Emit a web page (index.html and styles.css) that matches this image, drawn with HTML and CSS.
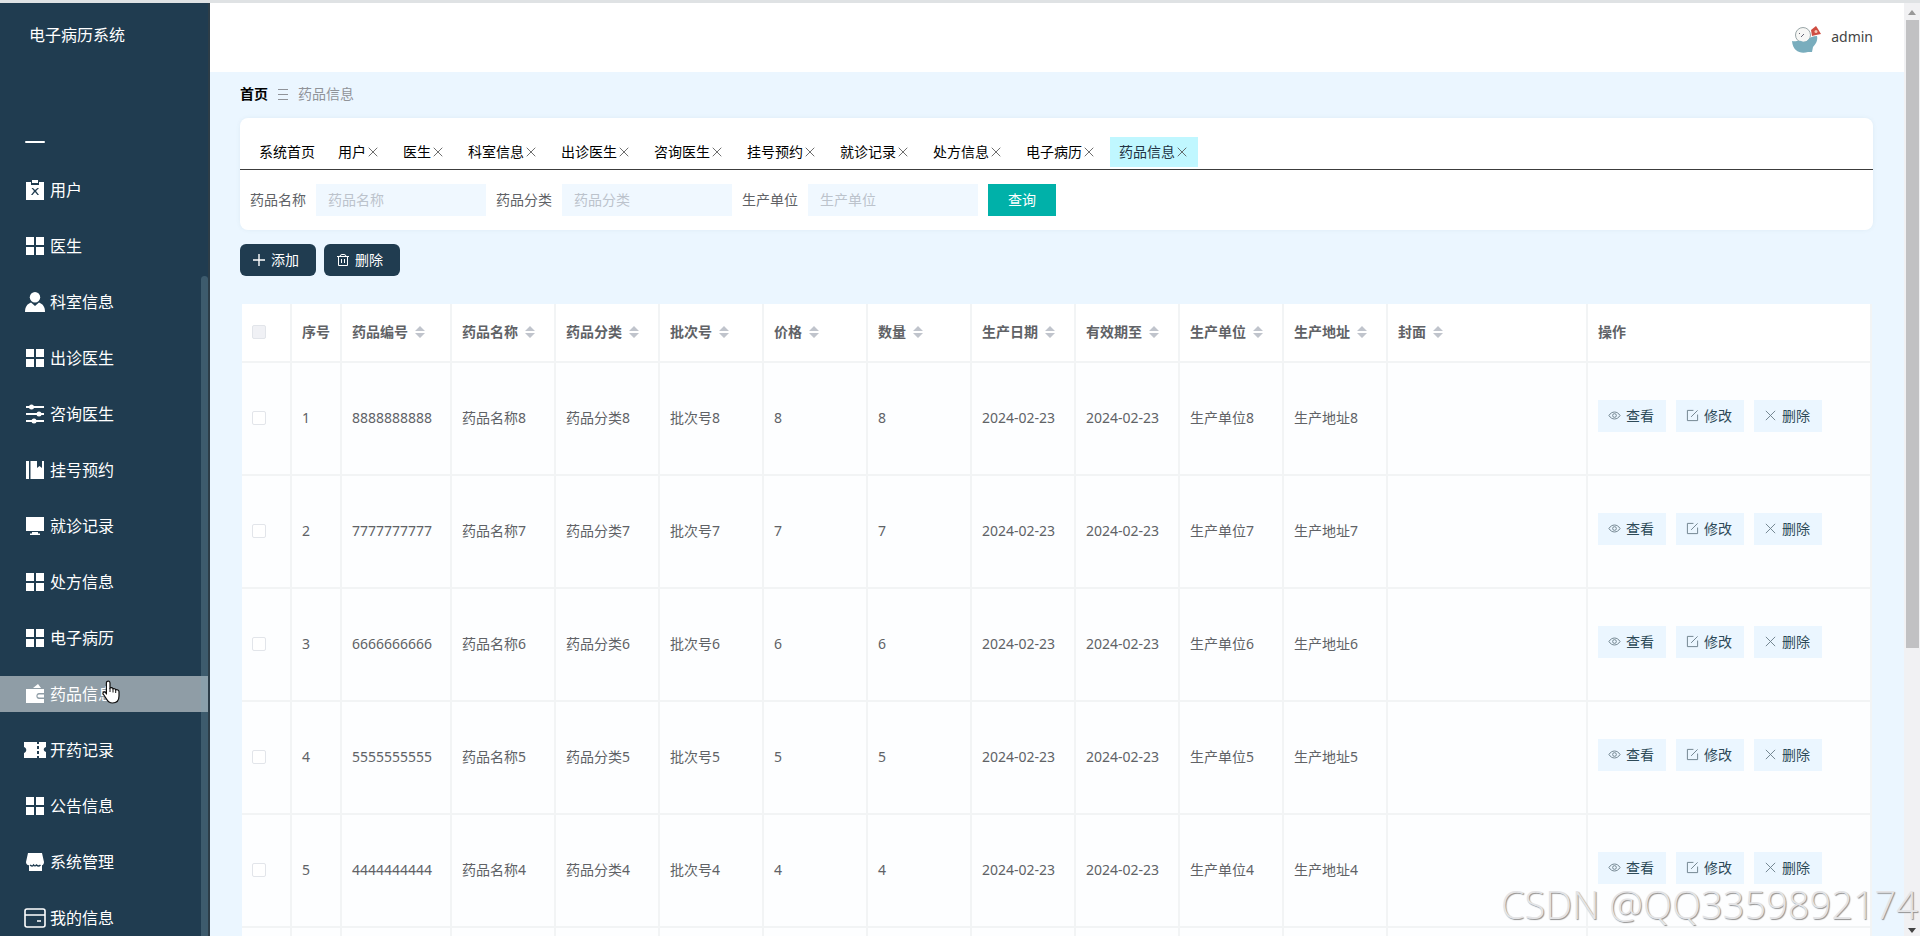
FILE: index.html
```html
<!DOCTYPE html>
<html lang="zh-CN">
<head>
<meta charset="utf-8">
<title>电子病历系统</title>
<link rel="stylesheet" href="styles.css">
</head>
<body>
<svg class="sprite" aria-hidden="true">
  <symbol id="grid" viewBox="0 0 20 20"><path d="M1 1h8v8H1zM11 1h8v8h-8zM1 11h8v8H1zM11 11h8v8h-8z"/></symbol>
  <symbol id="clip" viewBox="0 0 20 20"><path fill-rule="evenodd" d="M1 2h5v3h8V2h5v18H1zM7 0h6v3H7zM6.500 8 9 11l-3 4h1.500L10 12l2.500 3H14l-3-4 3-3h-1.500L10 10 8 8z"/></symbol>
  <symbol id="person" viewBox="0 0 20 20"><circle cx="10" cy="5.200" r="5.200"/><path d="M0 20c0-5 2-8 6-9.500l4 3.500 4-3.500c4 1.500 6 4.500 6 9.500z"/></symbol>
  <symbol id="sliders" viewBox="0 0 20 20"><path d="M1 2h18v2H1zM1 9h18v2H1zM1 16h18v2H1z"/><circle cx="6.500" cy="3" r="2.500"/><circle cx="14" cy="10" r="2.500"/><circle cx="9" cy="17" r="2.500"/></symbol>
  <symbol id="book" viewBox="0 0 20 20"><path d="M1 1h3v18H1zM5.500 1H12v7l2.500-2L17 8V1h2v18H5.500z"/></symbol>
  <symbol id="monitor" viewBox="0 0 20 20"><path d="M1 1h18v14H1zM7 16h6v1.500h2V19H5v-1.500h2z"/></symbol>
  <symbol id="wallet" viewBox="0 0 20 20"><path fill-rule="evenodd" d="M8 4 13 0l3 4zM1 5h18v4h-5c-3.500 0-3.500 6 0 6h5v4H1zM14 10.500h5v3h-5c-2 0-2-3 0-3z"/></symbol>
  <symbol id="ticket" viewBox="0 0 22 20"><path fill-rule="evenodd" d="M0 2h13v2h2V2h7v5c-3 1-3 4 0 5v6h-7v-2h-2v2H0v-5c3-1 3-5 0-6zM13 6v3h2V6zM13 11v3h2v-3z"/></symbol>
  <symbol id="shop" viewBox="0 0 20 20"><path d="M3 1h14l2 9c0 2-1 3-2 3.200V19H4v-5.800C2 13 1 12 1 10z"/><path d="M5 13c1.500 1.500 3 1 3.500 0 1 1.200 2 1.200 3 0 1 1 2.500 1.500 4 0" fill="none" stroke="#203c50" stroke-width="1.400"/></symbol>
  <symbol id="card" viewBox="0 0 22 20"><path fill="none" stroke="currentColor" stroke-width="1.600" d="M3 1h16q2 0 2 2v14q0 2-2 2H3q-2 0-2-2V3q0-2 2-2zM1 7h20M13 13h4"/></symbol>
  <symbol id="eye" viewBox="0 0 14 14"><path class="ln" d="M1 7c3-5 9-5 12 0-3 5-9 5-12 0z"/><circle class="ln" cx="7" cy="7" r="2"/></symbol>
  <symbol id="edit" viewBox="0 0 14 14"><path class="ln" d="M8 1.500H1.500v11h11V6M5.500 8.500l7-7"/></symbol>
  <symbol id="cross" viewBox="0 0 14 14"><path class="ln" d="m2 2 10 10M12 2 2 12"/></symbol>
  <symbol id="plus" viewBox="0 0 14 14"><path fill="none" stroke="currentColor" stroke-width="1.400" d="M7 1v12M1 7h12"/></symbol>
  <symbol id="trash" viewBox="0 0 14 14"><path class="ln" d="M1 3.500h12M4 3.500q0-2 2-2h2q2 0 2 2M2.500 3.500v9h9v-9M5.500 6v4M8.500 6v4"/></symbol>
  <symbol id="sort" viewBox="0 0 10 12"><path d="M5 0l5 5H0zM0 7h10l-5 5z"/></symbol>
  <symbol id="lines" viewBox="0 0 12 12"><path class="ln" d="M1 1.500h10M1 6.500h10M1 11.500h10"/></symbol>
</svg>
<div class="app">
  <aside class="side">
    <h1 class="brand">电子病历系统</h1>
    <nav class="menu">
      <a href="#" class="item cut" aria-label="首页"><span class="roof"></span></a>
      <a href="#" class="item"><svg class="mi"><use href="#clip"/></svg>用户</a>
      <a href="#" class="item"><svg class="mi"><use href="#grid"/></svg>医生</a>
      <a href="#" class="item"><svg class="mi"><use href="#person"/></svg>科室信息</a>
      <a href="#" class="item"><svg class="mi"><use href="#grid"/></svg>出诊医生</a>
      <a href="#" class="item"><svg class="mi"><use href="#sliders"/></svg>咨询医生</a>
      <a href="#" class="item"><svg class="mi"><use href="#book"/></svg>挂号预约</a>
      <a href="#" class="item"><svg class="mi"><use href="#monitor"/></svg>就诊记录</a>
      <a href="#" class="item"><svg class="mi"><use href="#grid"/></svg>处方信息</a>
      <a href="#" class="item"><svg class="mi"><use href="#grid"/></svg>电子病历</a>
      <a href="#" class="item on"><svg class="mi"><use href="#wallet"/></svg>药品信息
        <svg class="hand" viewBox="0 0 18 24"><path d="M5 1.500c1.500-1 3 0 3 1.500v5c1-.8 2.500-.3 3 .8 1-.5 2.400 0 2.700 1 1.500-.4 3.300.2 3.300 2V16c0 4-2 7-6.500 7-4 0-5-2-6-4L1.200 14c-.8-1.700 1-2.800 2.200-1.500l1 1V3q0-1 .6-1.500z" fill="#fff" stroke="#111" stroke-width="1.200"/><path d="M8 8v4M11 9v3.500M13.700 10v3" stroke="#111" fill="none"/></svg></a>
      <a href="#" class="item"><svg class="mi"><use href="#ticket"/></svg>开药记录</a>
      <a href="#" class="item"><svg class="mi"><use href="#grid"/></svg>公告信息</a>
      <a href="#" class="item"><svg class="mi"><use href="#shop"/></svg>系统管理</a>
      <a href="#" class="item"><svg class="mi"><use href="#card"/></svg>我的信息</a>
    </nav>
    <span class="sidebar-thumb"></span>
  </aside>
  <div class="page">
    <header class="top">
      <svg class="avatar" viewBox="0 0 30 28"><circle cx="12" cy="9" r="7.500" fill="#f7f7f5" stroke="#9aa6a8"/><path d="M1 15c4 1 6-1 9 0 2 1 5 1 7-1 2-3 5-4 9-4 1 4-1 8-4 11l-1 5h-4c-7 2-15 0-16-11z" fill="#79adbd"/><path d="m10 11 3-3m-5-1 1 1" stroke="#667"/><path d="m20 4 5-4 2 3 3 5-5 1-4 1z" fill="#cf4d42"/><circle cx="25" cy="5.500" r="1.500" fill="#f4c9b8"/></svg>
      <span>admin</span>
    </header>
    <main class="main">
      <nav class="crumb"><a href="#">首页</a><svg><use href="#lines"/></svg><span>药品信息</span></nav>
      <section class="panel">
        <div class="tabs">
          <a href="#" class="tab">系统首页</a>
          <a href="#" class="tab">用户<svg><use href="#cross"/></svg></a>
          <a href="#" class="tab">医生<svg><use href="#cross"/></svg></a>
          <a href="#" class="tab">科室信息<svg><use href="#cross"/></svg></a>
          <a href="#" class="tab">出诊医生<svg><use href="#cross"/></svg></a>
          <a href="#" class="tab">咨询医生<svg><use href="#cross"/></svg></a>
          <a href="#" class="tab">挂号预约<svg><use href="#cross"/></svg></a>
          <a href="#" class="tab">就诊记录<svg><use href="#cross"/></svg></a>
          <a href="#" class="tab">处方信息<svg><use href="#cross"/></svg></a>
          <a href="#" class="tab">电子病历<svg><use href="#cross"/></svg></a>
          <a href="#" class="tab active">药品信息<svg><use href="#cross"/></svg></a>
        </div>
        <form class="search">
          <label for="q1">药品名称</label><input id="q1" type="text" placeholder="药品名称">
          <label for="q2">药品分类</label><input id="q2" type="text" placeholder="药品分类">
          <label for="q3">生产单位</label><input id="q3" type="text" placeholder="生产单位">
          <button type="button">查询</button>
        </form>
      </section>
      <div class="tools">
        <button type="button"><svg><use href="#plus"/></svg>添加</button>
        <button type="button"><svg><use href="#trash"/></svg>删除</button>
      </div>
      <table class="grid">
        <colgroup><col class="c-s"><col class="c-s"><col class="c-id"><col span="9" class="c-m"><col class="c-pic"><col></colgroup>
        <thead><tr>
          <th><input type="checkbox" disabled aria-label="全选"></th><th>序号</th>
          <th>药品编号<svg><use href="#sort"/></svg></th><th>药品名称<svg><use href="#sort"/></svg></th><th>药品分类<svg><use href="#sort"/></svg></th><th>批次号<svg><use href="#sort"/></svg></th><th>价格<svg><use href="#sort"/></svg></th><th>数量<svg><use href="#sort"/></svg></th><th>生产日期<svg><use href="#sort"/></svg></th><th>有效期至<svg><use href="#sort"/></svg></th><th>生产单位<svg><use href="#sort"/></svg></th><th>生产地址<svg><use href="#sort"/></svg></th><th>封面<svg><use href="#sort"/></svg></th><th>操作</th>
        </tr></thead>
        <tbody>
        <tr><td><input type="checkbox" aria-label="选择 1"></td><td>1</td><td>8888888888</td><td>药品名称8</td><td>药品分类8</td><td>批次号8</td><td>8</td><td>8</td><td>2024-02-23</td><td>2024-02-23</td><td>生产单位8</td><td>生产地址8</td><td></td>
          <td><div class="ops"><button type="button"><svg><use href="#eye"/></svg>查看</button><button type="button"><svg><use href="#edit"/></svg>修改</button><button type="button"><svg><use href="#cross"/></svg>删除</button></div></td></tr>
        <tr><td><input type="checkbox" aria-label="选择 2"></td><td>2</td><td>7777777777</td><td>药品名称7</td><td>药品分类7</td><td>批次号7</td><td>7</td><td>7</td><td>2024-02-23</td><td>2024-02-23</td><td>生产单位7</td><td>生产地址7</td><td></td>
          <td><div class="ops"><button type="button"><svg><use href="#eye"/></svg>查看</button><button type="button"><svg><use href="#edit"/></svg>修改</button><button type="button"><svg><use href="#cross"/></svg>删除</button></div></td></tr>
        <tr><td><input type="checkbox" aria-label="选择 3"></td><td>3</td><td>6666666666</td><td>药品名称6</td><td>药品分类6</td><td>批次号6</td><td>6</td><td>6</td><td>2024-02-23</td><td>2024-02-23</td><td>生产单位6</td><td>生产地址6</td><td></td>
          <td><div class="ops"><button type="button"><svg><use href="#eye"/></svg>查看</button><button type="button"><svg><use href="#edit"/></svg>修改</button><button type="button"><svg><use href="#cross"/></svg>删除</button></div></td></tr>
        <tr><td><input type="checkbox" aria-label="选择 4"></td><td>4</td><td>5555555555</td><td>药品名称5</td><td>药品分类5</td><td>批次号5</td><td>5</td><td>5</td><td>2024-02-23</td><td>2024-02-23</td><td>生产单位5</td><td>生产地址5</td><td></td>
          <td><div class="ops"><button type="button"><svg><use href="#eye"/></svg>查看</button><button type="button"><svg><use href="#edit"/></svg>修改</button><button type="button"><svg><use href="#cross"/></svg>删除</button></div></td></tr>
        <tr><td><input type="checkbox" aria-label="选择 5"></td><td>5</td><td>4444444444</td><td>药品名称4</td><td>药品分类4</td><td>批次号4</td><td>4</td><td>4</td><td>2024-02-23</td><td>2024-02-23</td><td>生产单位4</td><td>生产地址4</td><td></td>
          <td><div class="ops"><button type="button"><svg><use href="#eye"/></svg>查看</button><button type="button"><svg><use href="#edit"/></svg>修改</button><button type="button"><svg><use href="#cross"/></svg>删除</button></div></td></tr>
        <tr><td></td><td></td><td></td><td></td><td></td><td></td><td></td><td></td><td></td><td></td><td></td><td></td><td></td><td></td></tr>
        </tbody>
      </table>
    </main>
  </div>
  <div class="scroll"><svg viewBox="0 0 8 5"><path d="M4 0l4 5H0z" fill="#999"/></svg><span></span><svg class="down" viewBox="0 0 8 5"><path d="M0 0h8L4 5z" fill="#444"/></svg></div>
</div>
<div class="mark">CSDN @QQ3359892174</div>
</body>
</html>
```
FILE: styles.css
```css
* { box-sizing: border-box; }
body {
  margin: 0;
  height: 100vh;
  overflow: hidden;
  font: 14px/20px "Noto Sans", "Noto Sans CJK SC", sans-serif;
  color: #606266;
}
a { color: inherit; text-decoration: none; }
button, input { font: inherit; }
.sprite { position: absolute; width: 0; height: 0; }
svg { flex: none; fill: currentColor; }
.ln { fill: none; stroke: currentColor; stroke-width: 1; }

.app { display: flex; height: 100vh; border-top: 3px solid #dfe2e4; }

.side {
  position: relative;
  flex: none;
  width: 210px;
  overflow: hidden;
  background: #203c50;
  border-right: 2px solid #2c3d48;
  color: #fff;
  font-size: 16px;
}
.brand { margin: 0; height: 137px; padding: 20px 29px; font-size: 16px; line-height: 24px; font-weight: 400; }
.menu { display: flex; flex-direction: column; gap: 20px; }
.item { position: relative; display: flex; align-items: center; gap: 4px; height: 36px; flex: none; padding-left: 24px; }
.item.on { background: #8f9da6; }
.item.cut { height: 12px; align-items: flex-start; padding-left: 25px; }
.roof { width: 20px; height: 2px; margin-top: 1px; border-radius: 1px; background: #fff; }
.mi { width: 22px; height: 20px; }
.sidebar-thumb { position: absolute; right: 0; top: 273px; bottom: 0; width: 7px; border-radius: 4px 4px 0 0; background: rgba(130, 165, 180, .3); }
.hand { position: absolute; left: 102px; top: 4px; width: 18px; height: 24px; }

.page { flex: 1; min-width: 0; overflow: hidden; background: #ebf6ff; }
.top {
  display: flex;
  justify-content: flex-end;
  align-items: center;
  gap: 10px;
  height: 69px;
  padding: 0 31px 2px 30px;
  background: #fff;
  color: #444;
}
.avatar { width: 30px; height: 28px; margin-top: 6px; }
.main { padding: 12px 31px 0 30px; }
.crumb { display: flex; align-items: center; gap: 9px; height: 20px; color: #909399; }
.crumb a { color: #000; font-weight: 700; }
.crumb svg { width: 12px; height: 12px; }

.panel { margin-top: 14px; height: 112px; border-radius: 8px; background: #fff; box-shadow: 0 0 4px rgba(90, 110, 130, .08); }
.tabs { display: flex; gap: 5px; padding: 19px 10px 2px; border-bottom: 1px solid #3c3c3c; }
.tab { display: flex; align-items: center; height: 30px; padding: 0 9px; color: #000; }
.tab svg { width: 14px; height: 12px; color: #555; }
.tab.active { background: #c0f7ff; color: #234; }
.search { display: flex; align-items: center; gap: 10px; padding: 14px 10px; }
.search input { width: 170px; height: 32px; padding: 0 12px 2px; border: 0; background: #f0f8ff; }
.search input::placeholder { color: #bcc3cc; opacity: 1; }
.search button { width: 68px; height: 32px; padding: 0; border: 0; background: #00b1a9; color: #fff; }

.tools { display: flex; gap: 8px; margin-top: 14px; }
.tools button {
  display: flex;
  align-items: center;
  gap: 5px;
  width: 76px;
  height: 32px;
  padding: 0 12px;
  border: 0;
  border-radius: 6px;
  background: #203c50;
  color: #fff;
}
.tools svg { width: 14px; height: 14px; }

.grid { width: 100%; margin-top: 28px; padding: 0 1px 0 2px; table-layout: fixed; border-spacing: 0; }
.c-s { width: 50px; }
.c-id { width: 110px; }
.c-m { width: 104px; }
.c-pic { width: 200px; }
.grid th, .grid td {
  padding: 0 0 2px 10px;
  border: 0 solid #f2f4f5;
  border-width: 0 2px 2px 0;
  text-align: left;
  white-space: nowrap;
  background: #fdfeff;
}
.grid th { height: 59px; background: #fff; font-weight: 700; }
.grid td { height: 113px; }
.grid th svg { width: 10px; height: 12px; margin-left: 7px; vertical-align: -1px; color: #c0c4cc; }
.grid input { appearance: none; display: block; width: 14px; height: 14px; margin: 0; border: 1px solid #e2e5ea; border-radius: 2px; background: #fff; }
.grid input:disabled { background: #f0f1f5; }
.ops { display: flex; gap: 10px; padding-bottom: 4px; }
.ops button {
  display: flex;
  align-items: center;
  gap: 5px;
  width: 68px;
  height: 32px;
  padding: 0 10px;
  border: 0;
  background: #ebf6ff;
  color: #2d4a58;
}
.ops svg { width: 13px; height: 13px; color: #6c7f8a; }

.scroll { flex: none; display: flex; flex-direction: column; align-items: center; width: 16px; padding: 7px 0 3px; background: #f1f1f3; }
.scroll svg { width: 8px; height: 5px; }
.scroll span { width: 13px; height: 68%; margin-top: 5px; background: #c1c1c3; }
.scroll .down { margin-top: auto; }

.mark {
  position: absolute;
  right: 2px;
  bottom: 8px;
  font: 300 38px/48px "Open Sans", "Noto Sans", sans-serif;
  color: #e4e4e6;
  text-shadow: 1px 1px 1px #909090;
}
```
